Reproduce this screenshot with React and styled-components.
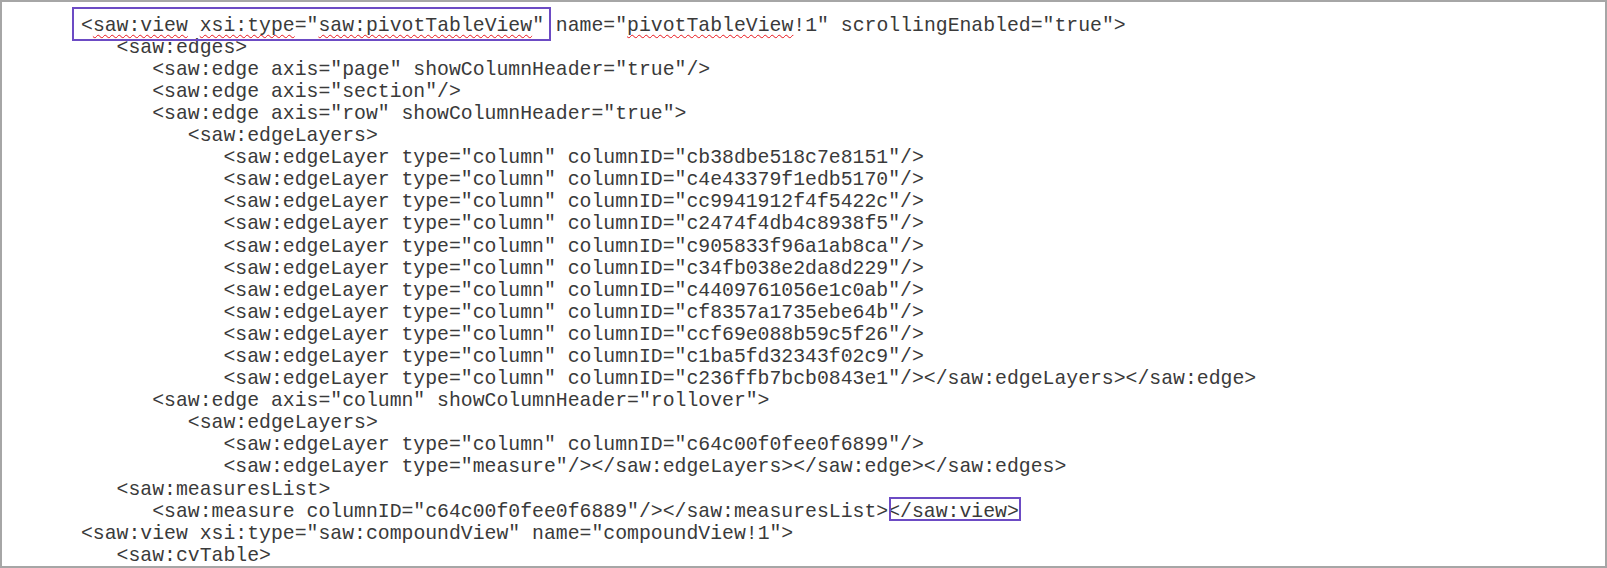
import React from 'react';
import styled, { createGlobalStyle } from 'styled-components';

const GlobalStyle = createGlobalStyle`
  html, body {
    margin: 0;
    padding: 0;
    background: #ffffff;
  }
`;

const Frame = styled.div`
  box-sizing: border-box;
  width: 1607px;
  height: 568px;
  border: 2px solid #a6a6a6;
  background: #ffffff;
  padding: 12.6px 0 0 79px;
  overflow: hidden;
`;

const Code = styled.div`
  font-family: 'Liberation Mono', 'Courier New', monospace;
  font-size: 19.8px;
  line-height: 22.1px;
  color: #3a3a3a;
  white-space: pre;
`;

const Line = styled.div`
  padding-left: ${({ $level }) => $level * 3}ch;
`;

const Misspelled = styled.span`
  text-decoration: underline wavy #e8141a;
  text-decoration-thickness: 1px;
  text-underline-offset: 3px;
  text-decoration-skip-ink: none;
`;

// annotation rectangle drawn over the code
const Marked = styled.span`
  position: relative;
  &::after {
    content: '';
    position: absolute;
    top: ${({ $t }) => $t}px;
    bottom: ${({ $b }) => $b}px;
    left: ${({ $l }) => $l}px;
    right: ${({ $r }) => $r}px;
    border: 2px solid #6c4bc4;
    pointer-events: none;
  }
`;

const edgeLayers = [
  'cb38dbe518c7e8151',
  'c4e43379f1edb5170',
  'cc9941912f4f5422c',
  'c2474f4db4c8938f5',
  'c905833f96a1ab8ca',
  'c34fb038e2da8d229',
  'c4409761056e1c0ab',
  'cf8357a1735ebe64b',
  'ccf69e088b59c5f26',
  'c1ba5fd32343f02c9',
];

const App = () => {
  return (
    <>
      <GlobalStyle />
      <Frame>
        <Code>
          <Line $level={0}>
            <Marked $t={-7.3} $b={-4} $l={-9} $r={-7}>
              {'<'}
              <Misspelled>saw:view</Misspelled> <Misspelled>xsi:type</Misspelled>="
              <Misspelled>saw:pivotTableView</Misspelled>"
            </Marked>
            {' name="'}
            <Misspelled>pivotTableView</Misspelled>
            {'!1" scrollingEnabled="true">'}
          </Line>
          <Line $level={1}>{'<saw:edges>'}</Line>
          <Line $level={2}>{'<saw:edge axis="page" showColumnHeader="true"/>'}</Line>
          <Line $level={2}>{'<saw:edge axis="section"/>'}</Line>
          <Line $level={2}>{'<saw:edge axis="row" showColumnHeader="true">'}</Line>
          <Line $level={3}>{'<saw:edgeLayers>'}</Line>
          {edgeLayers.map((id) => (
            <Line $level={4} key={id}>{`<saw:edgeLayer type="column" columnID="${id}"/>`}</Line>
          ))}
          <Line $level={4}>
            {'<saw:edgeLayer type="column" columnID="c236ffb7bcb0843e1"/></saw:edgeLayers></saw:edge>'}
          </Line>
          <Line $level={2}>{'<saw:edge axis="column" showColumnHeader="rollover">'}</Line>
          <Line $level={3}>{'<saw:edgeLayers>'}</Line>
          <Line $level={4}>{'<saw:edgeLayer type="column" columnID="c64c00f0fee0f6899"/>'}</Line>
          <Line $level={4}>{'<saw:edgeLayer type="measure"/></saw:edgeLayers></saw:edge></saw:edges>'}</Line>
          <Line $level={1}>{'<saw:measuresList>'}</Line>
          <Line $level={2}>
            {'<saw:measure columnID="c64c00f0fee0f6889"/></saw:measuresList>'}
            <Marked $t={-3.5} $b={1.5} $l={0.5} $r={-2}>{'</saw:view>'}</Marked>
          </Line>
          <Line $level={0}>{'<saw:view xsi:type="saw:compoundView" name="compoundView!1">'}</Line>
          <Line $level={1}>{'<saw:cvTable>'}</Line>
        </Code>
      </Frame>
    </>
  );
};

export default App;
